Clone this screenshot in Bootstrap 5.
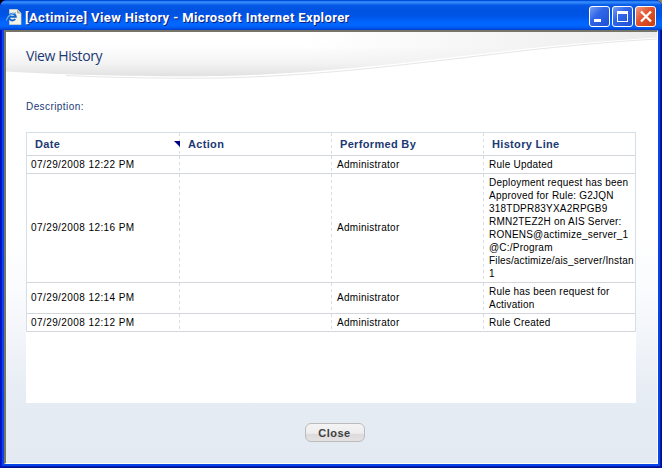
<!DOCTYPE html>
<html lang="en">
<head>
<meta charset="utf-8">
<title>[Actimize] View History</title>
<link href="https://cdn.jsdelivr.net/npm/bootstrap@5.3.0/dist/css/bootstrap.min.css" rel="stylesheet">
<style>
body{width:662px;height:468px;overflow:hidden;background:linear-gradient(90deg,#000 50%,#8b8776 50%);font-family:"Liberation Sans",sans-serif;font-size:10px;line-height:13px;letter-spacing:.42px;color:#000}
.win{height:468px;border-radius:7px 7px 0 0;overflow:hidden;background:#0844e8;padding:0 4px 4px;box-shadow:inset 1px 0 #0010c8,inset 2px 0 #0018d0,inset -1px 0 #00108c,inset -2px 0 #0019b4,inset 0 -1px #00108c,inset 0 -2px #0019b4}
.titlebar{height:30px;margin:0 -4px;padding:3px 6px 0;background:linear-gradient(#0050dc 0,#0050dc 3%,#3d95ff 6%,#2b80f8 10%,#0659e6 17%,#0052e0 35%,#0056e8 55%,#0066ff 75%,#0066ff 85%,#0058ee 93%,#003dcc 100%)}
.title-text{font:bold 13px/18px Roboto,sans-serif;letter-spacing:.37px;color:#fff;text-shadow:1px 1px #0a1f80;margin-left:3px;padding-top:2px;white-space:nowrap}
.view{height:434px;border:solid;border-width:2px 1px 1px 2px;border-color:#777568 #fff #fffff4 #777568;background:linear-gradient(#fff 0,#fff 200px,#fafbfe 260px,#f1f4f9 310px,#e8edf5 355px,#e4ebf2 385px,#e3eaf2 100%)}
.hero{height:50px;position:relative}
.hero svg{position:absolute;left:0;top:0}
.hero h1{position:relative;font:14px/20px "Open Sans",sans-serif;letter-spacing:-.4px;color:#1c3974;padding:14px 0 0 20px}
.desc{color:#1c3974;padding:18px 0 0 20px;height:50px}
.panel{width:610px;height:271px;margin-left:20px;background:#fff}
.grid{width:610px;table-layout:fixed;border-collapse:separate;border-spacing:0;border:1px solid #d5dfe6;border-bottom:0}
.grid td,.grid th{height:18px;padding:2px 0 2px 4px;border-bottom:1px solid #d3d7dc;vertical-align:middle;white-space:nowrap;background:repeating-linear-gradient(#d9dce6 0 3px,transparent 3px 6px) right top/1px 100% no-repeat}
.grid td:last-child,.grid th:last-child{background:none;padding-left:5px}
.grid td:last-child{letter-spacing:.22px}
.grid td:nth-child(3){padding-left:5px;letter-spacing:.28px}
.grid .tall td:not(:last-child){padding:1px 0 3px 4px}
.grid .tall td:nth-child(3){padding-left:5px!important}
.grid th{height:23px;font-size:11px;letter-spacing:.33px;color:#1c3974;padding-left:8px!important}
.grid .tight{letter-spacing:.16px}
.sort{width:6px;height:6px;background:#00008b;clip-path:polygon(0 0,100% 0,100% 100%)}
.btn-close-win{width:60px;height:19px;border:1px solid #bcbcbc;border-radius:6px;background:linear-gradient(#f4f4f4 0,#ededed 55%,#dcdada 60%,#e4e2e2 100%);font:bold 11px/16px "Liberation Sans",sans-serif;letter-spacing:.5px;color:#404040;padding:0;margin:20px 2px 0 0}
</style>
<script src="https://cdn.jsdelivr.net/npm/bootstrap@5.3.0/dist/js/bootstrap.bundle.min.js"></script>
</head>
<body>
<div class="win">
  <div class="titlebar d-flex align-items-center">
    <svg width="16" height="18" viewBox="0 0 16 18"><path d="M3.500 1.500h8l3.500 3.500v11.500h-11.500z" fill="#f4f3e8" stroke="#d8d5c4" stroke-width=".7"/><path d="M11.500 1.500v3.500h3.500" fill="#c9c6b5" stroke="#9a9788" stroke-width=".7"/><path d="M9.200 11a3.400 3.400 0 1 1 .6-2.300H4" fill="none" stroke="#1266cc" stroke-width="1.900"/><path d="M.7 12.500C0 9.500 5.500 4.700 10 4.900" fill="none" stroke="#6aaef0" stroke-width="1.200"/></svg>
    <span class="title-text flex-grow-1">[Actimize] View History - Microsoft Internet Explorer</span>
    <svg width="67" height="21" viewBox="0 0 67 21">
      <defs><linearGradient id="b" x2="1" y2="1"><stop stop-color="#7da2f2"/><stop offset=".4" stop-color="#3166e8"/><stop offset="1" stop-color="#1d50d2"/></linearGradient><linearGradient id="r" x2="1" y2="1"><stop stop-color="#f0a088"/><stop offset=".45" stop-color="#e2522c"/><stop offset="1" stop-color="#c83c0e"/></linearGradient></defs>
      <g stroke="#fff"><rect x=".5" y=".5" width="20" height="20" rx="2.500" fill="url(#b)"/><rect x="23.500" y=".5" width="20" height="20" rx="2.500" fill="url(#b)"/><rect x="46.500" y=".5" width="20" height="20" rx="2.500" fill="url(#r)"/></g>
      <path d="M5 13h7v3H5zM28 5h11v11H28zM29 8v7h9V8z" fill="#fff" fill-rule="evenodd"/><path d="M52 5.500l10 10M62 5.500l-10 10" stroke="#fff" stroke-width="2.300"/>
    </svg>
  </div>
  <div class="view">
    <div class="hero">
      <svg width="651" height="50" viewBox="0 0 651 50">
        <defs><linearGradient id="s" x2="0" y2="45" gradientUnits="userSpaceOnUse"><stop offset=".3" stop-color="#fff"/><stop offset=".7" stop-color="#f3f3f3"/><stop offset="1" stop-color="#e0e0e0"/></linearGradient><linearGradient id="t" x1="300" x2="651" gradientUnits="userSpaceOnUse"><stop stop-color="#eee" stop-opacity="0"/><stop offset="1" stop-color="#ececec"/></linearGradient></defs>
        <path d="M0 39.500C60 43 150 45 215 44C300 42 370 34 434 26.500C500 19 560 11 651 5.500V0H0z" fill="url(#s)"/><path d="M0 39.500C60 43 150 45 215 44C300 42 370 34 434 26.500C500 19 560 11 651 5.500V0H0z" fill="url(#t)"/>
        <path d="M60 43.500C110 46 170 46.500 215 46C300 44 370 36 434 28.500C500 21 560 12.500 651 7" fill="none" stroke="#e6e6e6"/>
      </svg>
      <h1 class="m-0">View History</h1>
    </div>
    <div class="desc">Description:</div>
    <div class="panel">
      <table class="grid">
        <colgroup><col style="width:153px"><col style="width:152px"><col style="width:152px"><col></colgroup>
        <thead><tr><th><div class="d-flex justify-content-between align-items-center"><span>Date</span><span class="sort"></span></div></th><th>Action</th><th>Performed By</th><th>History Line</th></tr></thead>
        <tbody>
          <tr><td>07/29/2008 12:22 PM</td><td></td><td>Administrator</td><td>Rule Updated</td></tr>
          <tr class="tall"><td>07/29/2008 12:16 PM</td><td></td><td>Administrator</td><td>Deployment request has been<br>Approved for Rule: G2JQN<br>318TDPR83YXA2RPGB9<br>RMN2TEZ2H on AIS Server:<br>RONENS@actimize_server_1<br>@C:/Program<br><span class="tight">Files/actimize/ais_server/Instan</span><br>1</td></tr>
          <tr class="tall"><td>07/29/2008 12:14 PM</td><td></td><td>Administrator</td><td>Rule has been request for<br>Activation</td></tr>
          <tr><td>07/29/2008 12:12 PM</td><td></td><td>Administrator</td><td>Rule Created</td></tr>
        </tbody>
      </table>
    </div>
    <div class="text-center ps-2"><button type="button" class="btn-close-win">Close</button></div>
  </div>
</div>
</body>
</html>
